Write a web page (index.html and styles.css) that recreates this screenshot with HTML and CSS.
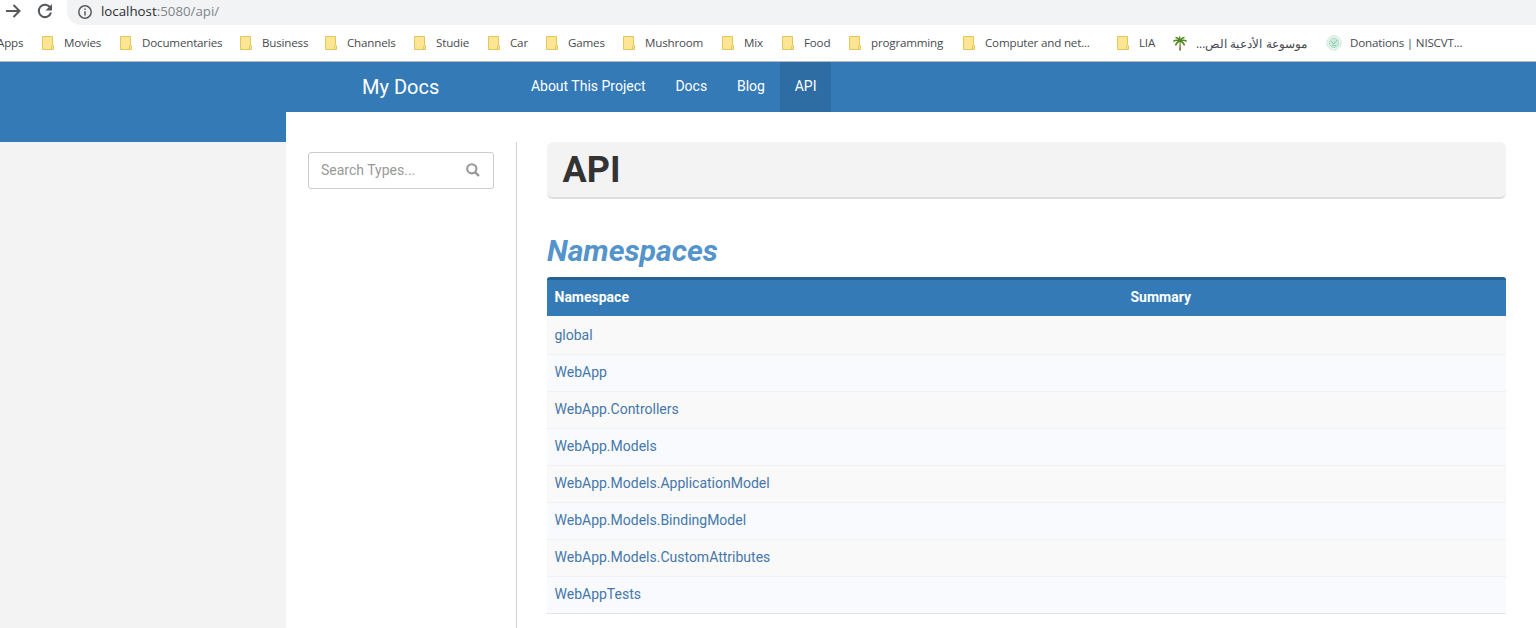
FILE: index.html
```html
<!DOCTYPE html>
<html lang="en">
<head>
<meta charset="utf-8">
<title>My Docs - API</title>
<link rel="stylesheet" href="styles.css">
</head>
<body>
<svg class="defs" width="0" height="0">
  <symbol id="folder" viewBox="0 0 12 14"><path d="M.5.5h10v8.300l1 1v3.700H.5z" fill="#fee593" stroke="#e3c65c"/><path d="M9.500 13V10.500l1-1.500" fill="none" stroke="#e3c65c"/></symbol>
</svg>
<div class="toolbar">
  <svg class="forward" width="16" height="16" viewBox="0 0 16 16"><path d="M0 8h13M7.500 2l6 6-6 6" fill="none" stroke="#55585c" stroke-width="2"/></svg>
  <svg class="reload" width="16" height="16" viewBox="0 0 16 16"><path d="M13.200 4.500A6.200 6.200 0 1 0 14 9.500" fill="none" stroke="#55585c" stroke-width="2"/><path d="M15 1v6.500H8.500z" fill="#55585c"/></svg>
  <div class="address">
    <svg width="14" height="14" viewBox="0 0 14 14"><circle cx="7" cy="7" r="6.200" fill="none" stroke="#5a5d61" stroke-width="1.500"/><path d="M7 6.200v4.300M7 3.500v1.600" stroke="#5a5d61" stroke-width="1.500"/></svg>
    <span class="url"><b>localhost</b>:5080/api/</span>
  </div>
</div>
<div class="bookmarks">
  <span class="apps">Apps</span>
  <span class="bm"><svg><use href="#folder"/></svg>Movies</span>
  <span class="bm"><svg><use href="#folder"/></svg>Documentaries</span>
  <span class="bm"><svg><use href="#folder"/></svg>Business</span>
  <span class="bm"><svg><use href="#folder"/></svg>Channels</span>
  <span class="bm"><svg><use href="#folder"/></svg>Studie</span>
  <span class="bm"><svg><use href="#folder"/></svg>Car</span>
  <span class="bm"><svg><use href="#folder"/></svg>Games</span>
  <span class="bm"><svg><use href="#folder"/></svg>Mushroom</span>
  <span class="bm"><svg><use href="#folder"/></svg>Mix</span>
  <span class="bm"><svg><use href="#folder"/></svg>Food</span>
  <span class="bm"><svg><use href="#folder"/></svg>programming</span>
  <span class="bm"><svg><use href="#folder"/></svg>Computer and net...</span>
  <span class="bm"><svg><use href="#folder"/></svg>LIA</span>
  <span class="bm site"><svg viewBox="0 0 14 15"><path d="M6.700 5h.8L8 14.500H6.200z" fill="#8a6a3a"/><path d="M7 5L6.500.5M7 5Q5 1.500 2.500 1.500M7 5Q9 1.500 11.500 1.500M7 5Q3 3.500.3 5.500M7 5Q11 3.500 13.700 5.500M7 5Q3.500 6 2.500 9.500M7 5Q10.500 6 11.500 9.500" fill="none" stroke="#4d8a24" stroke-width="1.500"/></svg><span class="arabic" dir="rtl">موسوعة الأدعية الص...</span></span>
  <span class="bm site seal"><svg viewBox="0 0 16 16"><circle cx="8" cy="8" r="7.200" fill="#e6f5ed" stroke="#bfe0cf" stroke-dasharray="1.500 .7"/><circle cx="8" cy="8" r="4.600" fill="#cdeadb" stroke="#a5d4bc" stroke-width=".8"/><path d="M5 6l3 3 3-4M6 10l4 1" fill="none" stroke="#8cc9ab"/></svg>Donations | NISCVT...</span>
</div>
<header class="navbar">
  <a class="brand">My Docs</a>
  <nav><a>About This Project</a><a>Docs</a><a>Blog</a><a class="active">API</a></nav>
</header>
<div class="page">
  <div class="gutter"></div>
  <aside class="sidebar">
    <div class="search"><span>Search Types...</span>
      <svg width="14" height="14" viewBox="0 0 14 14"><circle cx="5.800" cy="5.800" r="4.600" fill="none" stroke="#999" stroke-width="2.100"/><path d="M9.300 9.300l3 3" stroke="#999" stroke-width="2.400" stroke-linecap="round"/></svg>
    </div>
  </aside>
  <main class="content">
    <h1>API</h1>
    <h2>Namespaces</h2>
    <div class="table">
      <div class="row head"><span>Namespace</span><span>Summary</span></div>
      <div class="row first"><a>global</a></div>
      <div class="row"><a>WebApp</a></div>
      <div class="row"><a>WebApp.Controllers</a></div>
      <div class="row"><a>WebApp.Models</a></div>
      <div class="row"><a>WebApp.Models.ApplicationModel</a></div>
      <div class="row"><a>WebApp.Models.BindingModel</a></div>
      <div class="row"><a>WebApp.Models.CustomAttributes</a></div>
      <div class="row"><a>WebAppTests</a></div>
    </div>
  </main>
</div>
</body>
</html>
```
FILE: styles.css
```css
* { box-sizing: border-box; }
body { margin: 0; height: 628px; overflow: hidden; display: flex; flex-direction: column; background: #fff; font: 14px/20px Roboto, sans-serif; color: #333; }
.defs { position: absolute; }
.toolbar { height: 25px; flex: none; display: flex; padding-left: 6px; }
.toolbar > svg { margin-top: 3px; margin-right: 15px; }
.address { flex: 1; height: 25px; margin-left: -1px; padding: 0 0 2px 11px; display: flex; align-items: center; gap: 9px; background: #f1f3f4; border-radius: 0 0 0 14px; }
.url { font: 13.3px/20px "Open Sans", sans-serif; padding-bottom: 2px; color: #80868b; }
.url b { font-weight: 400; color: #2b2e32; }
.bookmarks { height: 37px; flex: none; display: grid; grid-template-columns: 42px 78px 120px 85px 89px 74px 58px 77px 99px 60px 67px 114px 154px 56px 153px 1fr; border-bottom: 1px solid #b5bbc1; font: 11.6px/16px "Open Sans", sans-serif; letter-spacing: -0.18px; color: #484b4f; white-space: nowrap; align-items: center; }
.apps { margin-left: -3px; }
.bm { display: flex; align-items: center; gap: 10px; }
.bm svg { width: 12px; height: 14px; flex: none; }
.site { gap: 9px; }
.site svg { width: 14px; height: 15px; }
.arabic { font-size: 11.9px; letter-spacing: 0; }
.seal { gap: 8px; }
.seal svg { width: 16px; height: 16px; }
.navbar { height: 50px; flex: none; display: flex; background: #337ab7; color: #fff; }
.brand { width: 516px; padding: 15px 0 0 362px; font-size: 20px; }
nav { display: flex; }
nav a { padding: 14px 14.9px 16px; }
nav .active { background: #2e6da4; }
.page { flex: 1; display: flex; min-height: 0; }
.gutter { width: 286px; background: #f3f3f3; border-top: 30px solid #337ab7; }
.sidebar { width: 231px; margin-top: 30px; padding: 10px 22px; border-right: 1px solid #d3d3d3; }
.search { height: 37px; display: flex; align-items: center; justify-content: space-between; padding: 0 13px 1px 12px; border: 1px solid #ccc; border-radius: 3px; color: #999; }
.content { flex: 1; padding: 30px 30px 0; }
h1 { margin: 0; height: 57px; padding: 8px 15.500px; background: #f3f3f3; border-bottom: 2px solid #ddd; border-radius: 6px; font-size: 36px; line-height: 40px; font-weight: 700; }
h2 { margin: 35px 0 10px; font-size: 30.2px; line-height: 33px; font-style: italic; font-weight: 700; color: #5394cb; }
.row { height: 37px; display: grid; grid-template-columns: 576px 1fr; align-items: center; padding: 0 7.500px 2px; border-bottom: 1px solid #f0f1f2; background: #f8fafd; color: #4577aa; }
.row:nth-child(even) { background: #f9f9f9; }
.row.first { height: 39px; padding-bottom: 0; }
.row:last-child { border-bottom-color: #e3e4e5; }
.row.head { height: 39px; border-top: 3px solid #286090; border-bottom: 0; border-radius: 3px 3px 0 0; background: #337ab7; color: #fff; font-weight: 700; }
```
